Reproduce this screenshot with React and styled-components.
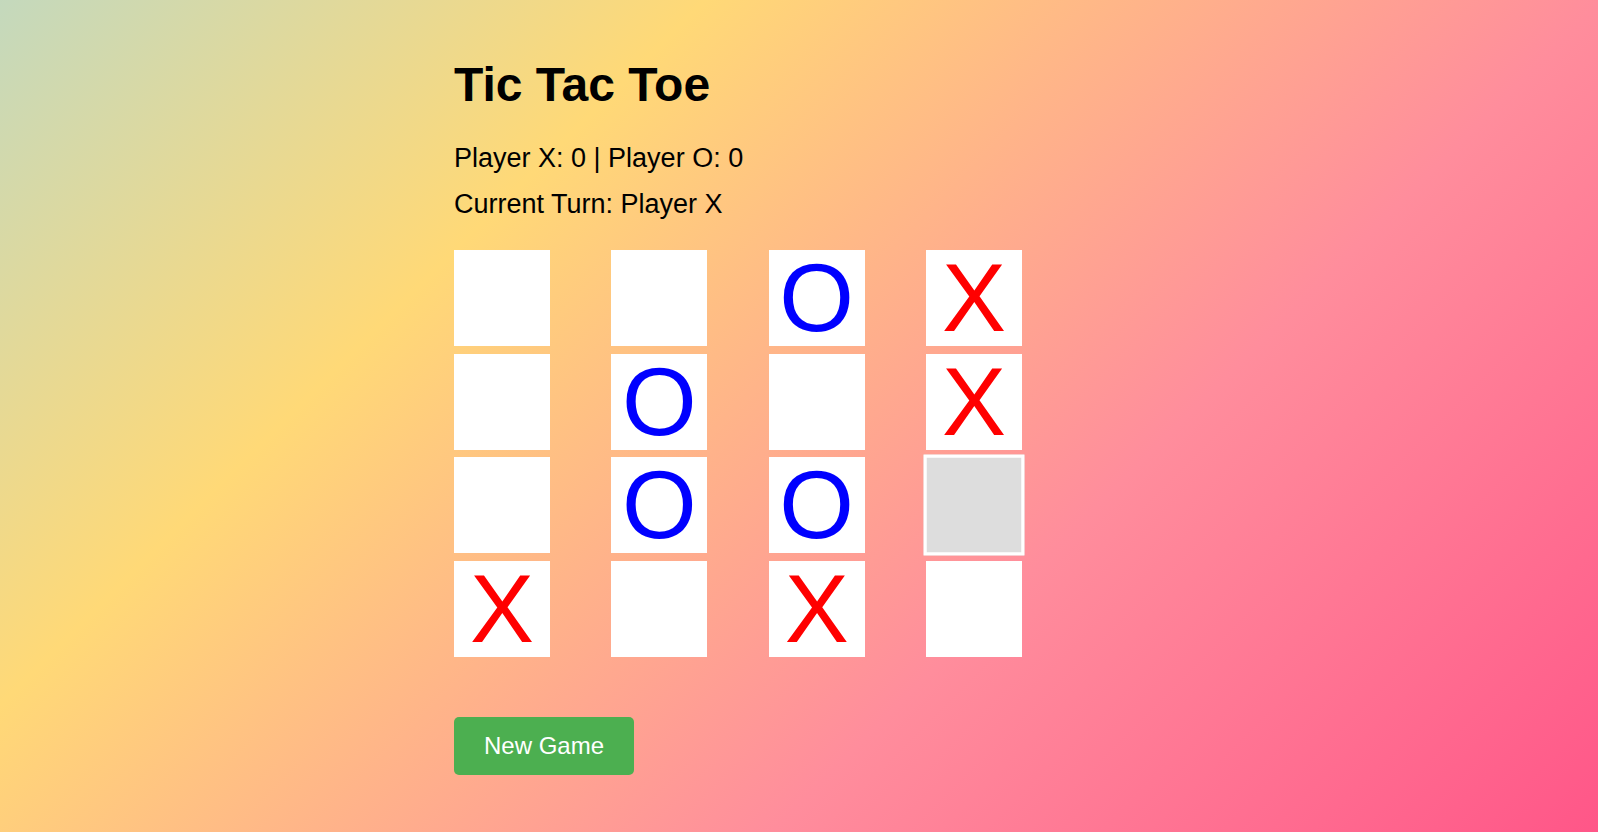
import React, { useState } from 'react'
import styled, { createGlobalStyle } from 'styled-components'

const GlobalStyle = createGlobalStyle`
  html, body {
    margin: 0;
    padding: 0;
  }
  body {
    font-family: "Liberation Sans", Arial, Helvetica, sans-serif;
    color: #000;
  }
`

// starting board, same as the one in the screenshot
const initialBoard = [
  '', '', 'O', 'X',
  '', 'O', '', 'X',
  '', 'O', 'O', '',
  'X', '', 'X', '',
]

function App() {
  const [board, setBoard] = useState(initialBoard)
  const [turn, setTurn] = useState('X')
  const [score] = useState({ X: 0, O: 0 })
  const [hovered, setHovered] = useState(11)

  const handleClick = (i) => {
    if (board[i]) return
    const next = [...board]
    next[i] = turn
    setBoard(next)
    setTurn(turn === 'X' ? 'O' : 'X')
  }

  const newGame = () => {
    setBoard(Array(16).fill(''))
    setTurn('X')
  }

  return (
    <>
      <GlobalStyle />
      <Page>
        <Container>
          <Title>Tic Tac Toe</Title>
          <Info>
            <Line>Player X: {score.X} | Player O: {score.O}</Line>
            <Line>Current Turn: Player {turn}</Line>
          </Info>
          <Board>
            {board.map((value, i) => (
              <Cell
                key={i}
                $active={hovered === i}
                $mark={value}
                onMouseEnter={() => setHovered(i)}
                onClick={() => handleClick(i)}
              >
                {value}
              </Cell>
            ))}
          </Board>
          <NewGameButton onClick={newGame}>New Game</NewGameButton>
        </Container>
      </Page>
    </>
  )
}

export default App

const Page = styled.div`
  min-height: 100vh;
  box-sizing: border-box;
  background: linear-gradient(
    135deg,
    #c4d9bd 0%,
    #ffd977 29%,
    #ff8d9c 66%,
    #ff5688 100%
  );
`

const Container = styled.div`
  width: 690px;
  margin: 0 auto;
  padding: 57px 0 40px;
  display: flex;
  flex-direction: column;
  align-items: flex-start;
`

const Title = styled.h1`
  margin: 0 0 31px;
  font-size: 48px;
  font-weight: bold;
`

const Info = styled.div`
  display: flex;
  flex-direction: column;
  gap: 15px;
`

const Line = styled.p`
  margin: 0;
  font-size: 27px;
`

const Board = styled.div`
  margin-top: 30px;
  display: grid;
  grid-template-columns: repeat(4, 96px);
  grid-auto-rows: 96px;
  column-gap: 61.33px;
  row-gap: 7.7px;
`

const Cell = styled.div`
  box-sizing: border-box;
  width: 96px;
  height: 96px;
  border: 3px solid #fff;
  background: ${(p) => (p.$active ? '#ddd' : '#fff')};
  transform: ${(p) => (p.$active ? 'scale(1.05)' : 'none')};
  display: flex;
  align-items: center;
  justify-content: center;
  font-size: 96px;
  color: ${(p) => (p.$mark === 'O' ? '#0000ff' : '#ff0000')};
  cursor: pointer;
  user-select: none;
`

const NewGameButton = styled.button`
  margin-top: 60px;
  padding: 15px 30px;
  border: none;
  border-radius: 5px;
  background-color: #4caf50;
  color: #fff;
  font-family: inherit;
  font-size: 24px;
  cursor: pointer;
`
